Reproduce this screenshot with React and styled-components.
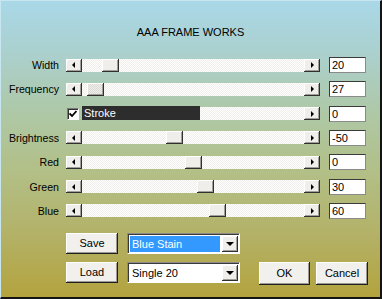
import React from "react";
import styled, { createGlobalStyle } from "styled-components";

const Global = createGlobalStyle`
  html, body { margin: 0; padding: 0; }
  body {
    width: 382px;
    height: 299px;
    overflow: hidden;
    font-family: "Liberation Sans", Arial, sans-serif;
  }
`;

const bevel = `
  background: #efeeea;
  box-shadow: inset -1px -1px #303030, inset 1px 1px #ffffff, inset -2px -2px #a09f9a;
`;

const Dialog = styled.div`
  box-sizing: border-box;
  width: 382px;
  height: 299px;
  background: linear-gradient(
    to bottom,
    #a9d8e8 0%,
    #abd0cd 18%,
    #aec8a6 38%,
    #b2bf86 58%,
    #b3b269 78%,
    #b3a33e 100%
  );
  border-top: 1px solid #c8e6f0;
  border-left: 1px solid #c8e6f0;
  border-right: 2px solid #141414;
  border-bottom: 2px solid #141414;
  display: flex;
  flex-direction: column;
  font-size: 11px;
  color: #000;
`;

const Title = styled.div`
  margin-top: 23px;
  height: 16px;
  line-height: 16px;
  text-align: center;
  font-size: 11px;
`;

const Rows = styled.div`
  margin-top: 17px;
  display: flex;
  flex-direction: column;
  gap: 8.33px;
`;

const Row = styled.div`
  display: flex;
  align-items: center;
  height: 16px;
`;

const Label = styled.div`
  width: 58px;
  margin-right: 7px;
  text-align: right;
  font-size: 10.6px;
  white-space: nowrap;
`;

const Control = styled.div`
  width: 254px;
  height: 13px;
  display: flex;
  align-items: stretch;
`;

const ArrowButton = styled.div`
  box-sizing: border-box;
  width: 16px;
  height: 13px;
  ${bevel}
  display: flex;
  align-items: center;
  justify-content: center;
  &::after {
    content: "";
    width: 0;
    height: 0;
    border-top: 3px solid transparent;
    border-bottom: 3px solid transparent;
    ${(p) =>
      p.$dir === "left"
        ? "border-right: 3px solid #000; margin-right: 1px;"
        : "border-left: 3px solid #000; margin-left: 1px;"}
  }
`;

const Track = styled.div`
  flex: 1;
  height: 13px;
  background: repeating-conic-gradient(#ffffff 0 25%, #efeeea 0 50%) 0 0 / 2px 2px;
  display: flex;
`;

const Thumb = styled.div`
  width: 17px;
  height: 13px;
  margin-left: ${(p) => p.$offset}px;
  ${bevel}
  ${(p) =>
    p.$focused &&
    `background-image: repeating-conic-gradient(#efeeea 0 25%, #dcdad4 0 50%);
     background-size: 2px 2px;`}
`;

const CheckBox = styled.div`
  box-sizing: border-box;
  width: 12px;
  height: 12px;
  margin-left: 1px;
  margin-top: 1px;
  background: #fff;
  border-top: 1px solid #7a7a7a;
  border-left: 1px solid #7a7a7a;
  border-bottom: 1px solid #ffffff;
  border-right: 1px solid #ffffff;
  box-shadow: inset 1px 1px #303030;
  display: flex;
  align-items: center;
  justify-content: center;
`;

const StrokeLabel = styled.div`
  margin-left: 3px;
  width: 118px;
  height: 14px;
  margin-top: -1px;
  background: #2d2d2d;
  color: #fff;
  font-size: 11px;
  line-height: 14px;
  padding-left: 2px;
  box-sizing: border-box;
`;

const ValueBox = styled.div`
  box-sizing: border-box;
  width: 37px;
  height: 16px;
  margin-left: 9px;
  background: #fff;
  border-top: 1px solid #3a3a3a;
  border-left: 1px solid #3a3a3a;
  border-right: 1px solid #8a8a8a;
  border-bottom: 1px solid #8a8a8a;
  font-size: 11px;
  line-height: 14px;
  padding-left: 2px;
`;

const Bottom = styled.div`
  margin-top: 14px;
  padding-left: 65px;
  display: flex;
  flex-direction: column;
  gap: 8px;
`;

const BottomRow = styled.div`
  display: flex;
  align-items: flex-start;
`;

const PushButton = styled.div`
  box-sizing: border-box;
  width: ${(p) => p.$w}px;
  height: ${(p) => p.$h}px;
  margin-left: ${(p) => p.$ml || 0}px;
  background: #f1f0ec;
  box-shadow: inset -1px -1px #202020, inset 1px 1px #ffffff, inset -2px -2px #9a9994;
  display: flex;
  align-items: center;
  justify-content: center;
  font-size: 11px;
  padding-bottom: 1px;
`;

const Combo = styled.div`
  box-sizing: border-box;
  width: 113px;
  height: 21px;
  margin-left: 9px;
  background: #fff;
  border-top: 1px solid #8a8a8a;
  border-left: 1px solid #8a8a8a;
  border-right: 1px solid #ffffff;
  border-bottom: 1px solid #ffffff;
  box-shadow: inset 1px 1px #3a3a3a;
  display: flex;
  align-items: stretch;
  padding: 2px 1px 1px 2px;
  gap: 2px;
`;

const ComboText = styled.div`
  flex: 1;
  background: ${(p) => (p.$selected ? "#3399ff" : "#fff")};
  color: ${(p) => (p.$selected ? "#fff" : "#000")};
  font-size: 11px;
  line-height: 16px;
  padding-left: 2px;
`;

const DropButton = styled.div`
  box-sizing: border-box;
  width: 16px;
  ${bevel}
  display: flex;
  align-items: center;
  justify-content: center;
  &::after {
    content: "";
    width: 0;
    height: 0;
    border-left: 4px solid transparent;
    border-right: 4px solid transparent;
    border-top: 4px solid #000;
  }
`;

function Slider({ label, offset, value, focused }) {
  return (
    <Row>
      <Label>{label}</Label>
      <Control>
        <ArrowButton $dir="left" />
        <Track>
          <Thumb $offset={offset} $focused={focused} />
        </Track>
        <ArrowButton $dir="right" />
      </Control>
      <ValueBox>{value}</ValueBox>
    </Row>
  );
}

export default function App() {
  return (
    <>
      <Global />
      <Dialog>
        <Title>AAA FRAME WORKS</Title>
        <Rows>
          <Slider label="Width" offset={20} value="20" />
          <Slider label="Frequency" offset={5} value="27" focused />
          <Row>
            <Label />
            <Control>
              <CheckBox>
                <svg width="8" height="8" viewBox="0 0 8 8">
                  <path d="M0.5 3.5 L3 6 L7.5 1" stroke="#000" strokeWidth="1.8" fill="none" />
                </svg>
              </CheckBox>
              <StrokeLabel>Stroke</StrokeLabel>
              <Track />
              <ArrowButton $dir="right" />
            </Control>
            <ValueBox>0</ValueBox>
          </Row>
          <Slider label="Brightness" offset={84} value="-50" />
          <Slider label="Red" offset={103} value="0" />
          <Slider label="Green" offset={115} value="30" />
          <Slider label="Blue" offset={127} value="60" />
        </Rows>
        <Bottom>
          <BottomRow>
            <PushButton $w={52} $h={21}>Save</PushButton>
            <Combo>
              <ComboText $selected>Blue Stain</ComboText>
              <DropButton />
            </Combo>
          </BottomRow>
          <BottomRow>
            <PushButton $w={52} $h={21}>Load</PushButton>
            <Combo>
              <ComboText>Single 20</ComboText>
              <DropButton />
            </Combo>
            <PushButton $w={51} $h={23} $ml={19}>OK</PushButton>
            <PushButton $w={52} $h={23} $ml={6}>Cancel</PushButton>
          </BottomRow>
        </Bottom>
      </Dialog>
    </>
  );
}
